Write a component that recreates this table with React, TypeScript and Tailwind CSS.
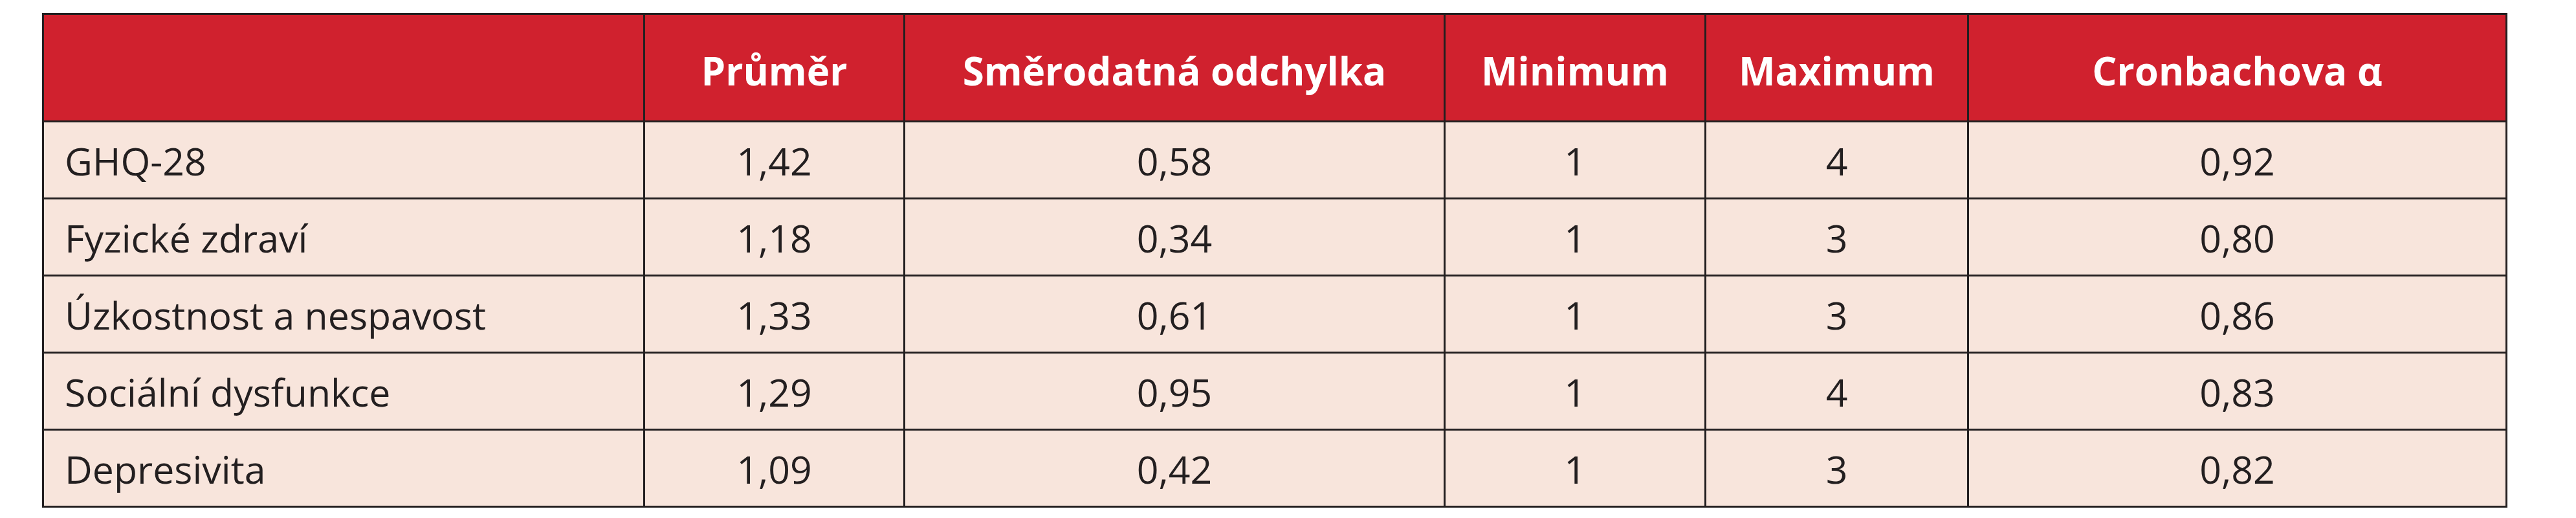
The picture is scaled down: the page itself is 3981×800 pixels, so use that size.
import React from "react";

const headers = ["", "Průměr", "Směrodatná odchylka", "Minimum", "Maximum", "Cronbachova α"];

const rows: string[][] = [
  ["GHQ-28", "1,42", "0,58", "1", "4", "0,92"],
  ["Fyzické zdraví", "1,18", "0,34", "1", "3", "0,80"],
  ["Úzkostnost a nespavost", "1,33", "0,61", "1", "3", "0,86"],
  ["Sociální dysfunkce", "1,29", "0,95", "1", "4", "0,83"],
  ["Depresivita", "1,09", "0,42", "1", "3", "0,82"],
];

export default function App() {
  return (
    <div className="w-[3981px] h-[800px] bg-white pt-[20px] pl-[65px]" style={{ fontFamily: '"Open Sans", "Noto Sans", sans-serif' }}>
      <div className="grid grid-cols-[929px_402px_835px_403px_406px_832px] w-max border-t-[3px] border-l-[3px] border-[#231f20]">
        {headers.map((h, i) => (
          <div
            key={"h" + i}
            className="h-[166px] bg-[#d0212e] border-r-[3px] border-b-[3px] border-[#231f20] flex items-center justify-center text-white font-bold text-[60px] leading-none pt-[8px]"
          >
            {h}
          </div>
        ))}
        {rows.map((r, ri) =>
          r.map((c, ci) => (
            <div
              key={ri + "-" + ci}
              className={
                ci === 0
                  ? "h-[119px] bg-[#f8e5dc] border-r-[3px] border-b-[3px] border-[#231f20] flex items-center justify-start pl-[32px] text-[#231f20] text-[59px] leading-none pt-[3px]"
                  : "h-[119px] bg-[#f8e5dc] border-r-[3px] border-b-[3px] border-[#231f20] flex items-center justify-center text-[#231f20] text-[59px] leading-none pt-[3px]"
              }
            >
              {c}
            </div>
          ))
        )}
      </div>
    </div>
  );
}
